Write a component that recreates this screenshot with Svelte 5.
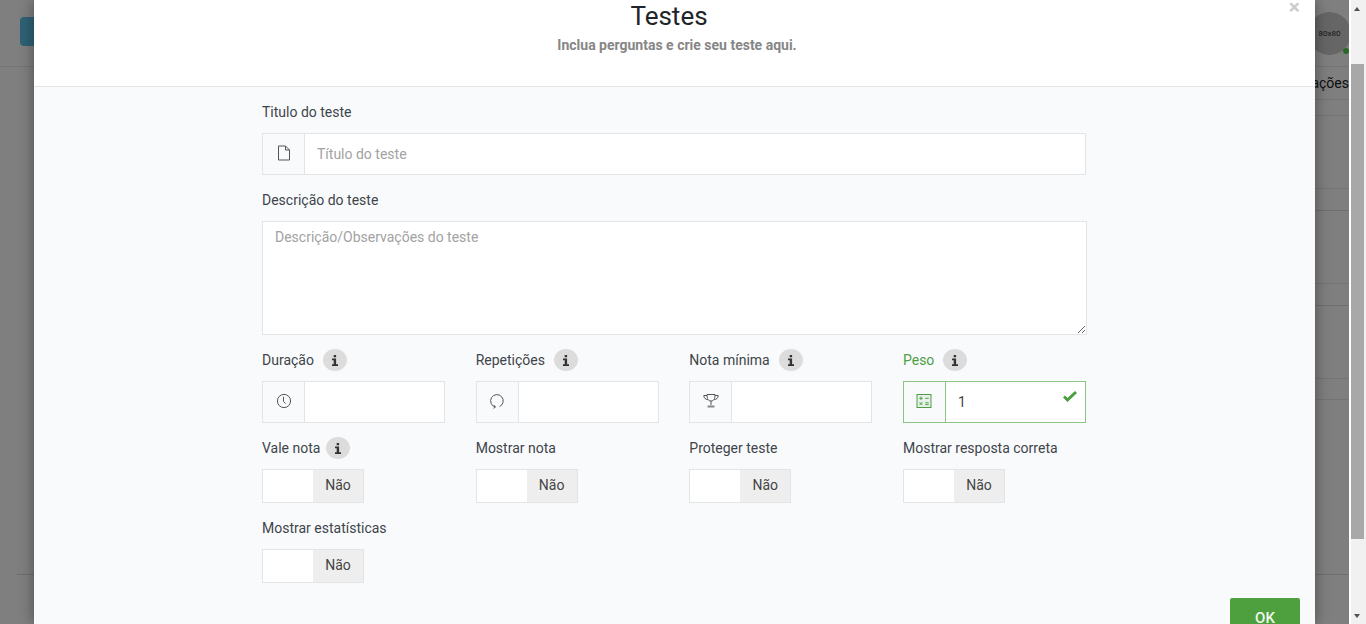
<script>
  const metrics = [
    { label: 'Duração', icon: 'clock' },
    { label: 'Repetições', icon: 'repeat' },
    { label: 'Nota mínima', icon: 'trophy' },
    { label: 'Peso', icon: 'calc', value: '1', valid: true }
  ];
  const toggles = [
    { label: 'Vale nota', info: true },
    { label: 'Mostrar nota' },
    { label: 'Proteger teste' },
    { label: 'Mostrar resposta correta' },
    { label: 'Mostrar estatísticas' }
  ];
</script>

{#snippet infoBadge(tight)}
  <span class="badge" class:tight>
    <svg width="8" height="11" viewBox="0 0 8 11" fill="#333">
      <path d="M2.7 0h2.4v2.2H2.7zM1 3.4h4.1v5.8H7V11H1V9.2h1.7V5.2H1z" />
    </svg>
  </span>
{/snippet}

{#snippet icon(name)}
  <svg width="16" height="16" viewBox="0 0 16 16" fill="none" stroke="currentColor" stroke-width="1">
    {#if name === 'file'}
      <path d="M2.5 1h7L13.5 5v10h-11zM9.5 1v4h4" />
    {:else if name === 'clock'}
      <circle cx="8" cy="8" r="6.6" />
      <path d="M7.5 3.8V8.4l2 2.2" />
    {:else if name === 'repeat'}
      <path d="M6.3 14A6.3 6.3 0 1 1 10.6 13.6" />
      <path d="M5 12.2l1.4 1.9-1.9 1.2" />
    {:else if name === 'trophy'}
      <path d="M4 1.5h8c0 4.500-1.200 6.500-4 6.500s-4-2-4-6.500z" />
      <path d="M4 2.500H.8c0 2.500 1.500 3.800 4 4.200M12 2.500h3.200c0 2.500-1.500 3.800-4 4.200" />
      <path d="M8 8v4" />
      <path d="M4.500 13.500h7" stroke-width="2" stroke-opacity=".7" />
    {:else if name === 'calc'}
      <rect x="1" y="1.500" width="14" height="13" fill="currentColor" fill-opacity=".1" />
      <path d="M3.300 5.300h3.400M5 3.600v3.400M9.300 5.300h3.400M3.600 9.200l2.800 2.800M6.400 9.200l-2.800 2.800M9.300 9.800h3.400M9.300 11.600h3.400" />
    {/if}
  </svg>
{/snippet}

<div class="screen">
  <div class="viewport">
    <div class="page">
      <div class="topbar">
        <span class="new-btn"></span>
        <span class="avatar">80x80<i class="online"></i></span>
      </div>
      <div class="table">
        <div class="thead">ações</div>
        <div class="row first"></div>
        <div class="row big"></div>
        <div class="row gap"></div>
        <div class="row big"></div>
        <div class="row gap"></div>
        <div class="row big"></div>
        <div class="row last"></div>
      </div>
      <div class="page-foot"></div>
    </div>

    <div class="backdrop"></div>

    <div class="modal">
      <header class="modal-head">
        <h2>Testes</h2>
        <p>Inclua perguntas e crie seu teste aqui.</p>
        <span class="close">×</span>
      </header>

      <div class="modal-body">
        <form class="form">
          <div class="group">
            <span class="label">Titulo do teste</span>
            <div class="input-group title-input">
              <span class="addon">{@render icon('file')}</span>
              <input placeholder="Título do teste" />
            </div>
          </div>

          <div class="group">
            <span class="label">Descrição do teste</span>
            <textarea placeholder="Descrição/Observações do teste"></textarea>
          </div>

          <div class="grid">
            {#each metrics as m}
              <div class="group" class:valid={m.valid}>
                <span class="label">{m.label}{@render infoBadge(false)}</span>
                <div class="input-group">
                  <span class="addon">{@render icon(m.icon)}</span>
                  <input value={m.value ?? ''} />
                  {#if m.valid}
                    <svg class="check" width="14" height="11" viewBox="0 0 14 11" fill="#4a9e3e">
                      <path d="M0 6.5l2-2L4.500 7 12 0l2 2-9.500 9z" />
                    </svg>
                  {/if}
                </div>
              </div>
            {/each}

            {#each toggles as t}
              <div class="group">
                <span class="label">{t.label}{#if t.info}{@render infoBadge(true)}{/if}</span>
                <div class="toggle">
                  <span class="knob"></span>
                  <span class="state">Não</span>
                </div>
              </div>
            {/each}
          </div>
        </form>

        <div class="modal-foot">
          <button type="button" class="ok">OK</button>
        </div>
      </div>
    </div>
  </div>

  <div class="scrollbar">
    <span class="arrow up"></span>
    <div class="track"><div class="thumb"></div></div>
    <span class="arrow down"></span>
  </div>
</div>

<style>
  :global(body) {
    margin: 0;
    overflow: hidden;
    font-family: Roboto, "Liberation Sans", sans-serif;
  }

  .screen {
    display: flex;
    width: 1366px;
    height: 624px;
    overflow: hidden;
  }

  .viewport {
    position: relative;
    flex: 1;
    overflow: hidden;
  }

  .page {
    height: 100%;
    background: #fff;
  }

  .topbar {
    display: flex;
    justify-content: space-between;
    height: 67px;
    padding: 12px 0 0 20px;
    box-sizing: border-box;
    border-bottom: 1px solid #e8e8e8;
  }

  .new-btn {
    width: 60px;
    height: 29px;
    margin-top: 5px;
    border-radius: 4px;
    background: #5cc4e8;
  }

  .avatar {
    position: relative;
    display: flex;
    align-items: center;
    justify-content: center;
    flex: none;
    width: 43px;
    height: 43px;
    margin-right: -2px;
    border-radius: 50%;
    background: #ccc;
    font-size: 8px;
    color: #333;
  }

  .online {
    position: absolute;
    right: 2px;
    bottom: 1px;
    width: 6px;
    height: 6px;
    border-radius: 50%;
    background: #55d055;
  }

  .table {
    margin-left: 200px;
  }

  .thead {
    height: 32px;
    line-height: 33px;
    text-align: right;
    font-size: 14px;
    color: #222;
    border-bottom: 1px solid #e8e8e8;
  }

  .row {
    border-bottom: 1px solid #e8e8e8;
  }

  .row.first { height: 15px; }
  .row.big { height: 72px; }
  .row.gap { height: 21px; border-bottom-color: #ddd; }
  .row.last { height: 20px; }

  .page-foot {
    height: 174px;
    margin-left: 17px;
    border-bottom: 1px solid #ddd;
  }

  .backdrop {
    position: absolute;
    inset: 0;
    background: rgba(0, 0, 0, 0.5);
  }

  .modal {
    position: absolute;
    top: 0;
    left: 34px;
    width: 1281px;
    height: 624px;
    overflow: hidden;
    background: #f9fafc;
    box-shadow: 0 0 14px rgba(0, 0, 0, 0.4);
  }

  .modal-head {
    position: relative;
    display: flex;
    flex-direction: column;
    align-items: center;
    height: 86px;
    background: #fff;
    border-bottom: 1px solid #e3e5e8;
  }

  .modal-head h2 {
    margin: 0 11px 0 0;
    font-size: 26px;
    font-weight: 400;
    line-height: 32px;
    color: #212529;
  }

  .modal-head p {
    margin: 5px 0 0 5px;
    font-size: 14px;
    font-weight: 700;
    line-height: 16px;
    color: #868686;
  }

  .close {
    position: absolute;
    top: 0;
    right: 15px;
    font-size: 21px;
    line-height: 14px;
    font-weight: 700;
    color: #ccc;
  }

  .form {
    width: 825px;
    margin: 0 auto;
    padding-top: 15px;
  }

  .group {
    margin-bottom: 15px;
  }

  .label {
    display: flex;
    align-items: center;
    height: 20px;
    margin-bottom: 11px;
    font-size: 14px;
    line-height: 20px;
    color: #40454a;
  }

  .badge {
    display: inline-flex;
    align-items: center;
    justify-content: center;
    flex: none;
    width: 24px;
    height: 22px;
    margin-left: 9px;
    border-radius: 50%;
    background: #dcdcdc;
  }

  .badge.tight {
    margin-left: 6px;
  }

  .input-group {
    position: relative;
    display: flex;
    height: 42px;
    box-sizing: border-box;
    border: 1px solid #e2e5e8;
    background: #fff;
  }

  .title-input {
    width: 824px;
  }

  .addon {
    display: flex;
    align-items: center;
    justify-content: center;
    flex: none;
    width: 41px;
    color: #555;
    background: #f9fafc;
    border-right: 1px solid #e2e5e8;
  }

  .addon svg {
    margin-bottom: 2px;
  }

  input {
    flex: 1;
    min-width: 0;
    width: 100%;
    padding: 0 12px;
    border: 0;
    outline: 0;
    background: #fff;
    font: 14px Roboto, sans-serif;
    color: #444;
  }

  textarea {
    display: block;
    width: 825px;
    height: 114px;
    box-sizing: border-box;
    padding: 6px 12px;
    border: 1px solid #e2e5e8;
    outline: 0;
    background: #fff;
    font: 14px/18px Roboto, sans-serif;
    color: #444;
  }

  input::placeholder,
  textarea::placeholder {
    color: #a2a2a2;
    opacity: 1;
  }

  .grid {
    display: grid;
    grid-template-columns: repeat(4, 183px);
    column-gap: 30.67px;
    align-items: start;
  }

  .valid .label {
    color: #4f9e45;
  }

  .valid .input-group,
  .valid .addon {
    border-color: #8cc484;
  }

  .valid .addon {
    color: #4f9e45;
  }

  .check {
    position: absolute;
    top: 9px;
    right: 8px;
  }

  .toggle {
    display: flex;
    width: 102px;
    height: 34px;
    box-sizing: border-box;
    border: 1px solid #e2e5e8;
    background: #fff;
  }

  .knob {
    width: 50px;
  }

  .state {
    flex: 1;
    font-size: 14px;
    line-height: 31px;
    text-align: center;
    color: #444;
    background: #eee;
  }

  .modal-foot {
    display: flex;
    justify-content: flex-end;
    padding-right: 15px;
  }

  .ok {
    width: 70px;
    height: 40px;
    padding: 0;
    border: 0;
    border-radius: 2px;
    background: #4ea03f;
    color: #eef7ec;
    font: 500 15px Roboto, sans-serif;
  }

  .scrollbar {
    display: flex;
    flex-direction: column;
    flex: none;
    width: 17px;
    background: #f1f1f1;
    border-left: 2px solid #fff;
    box-sizing: border-box;
  }

  .track {
    flex: 1;
    width: 13px;
    padding-top: 53px;
    box-sizing: border-box;
  }

  .thumb {
    height: 475px;
    background: #a8a8a8;
  }

  .arrow {
    display: block;
    flex: none;
    width: 0;
    height: 0;
    margin-left: 3px;
    border: 3.5px solid transparent;
  }

  .arrow.up {
    margin-top: 7px;
    border-top: 0;
    border-bottom: 4px solid #505050;
  }

  .arrow.down {
    margin-bottom: 6px;
    border-bottom: 0;
    border-top: 4px solid #505050;
  }
</style>
